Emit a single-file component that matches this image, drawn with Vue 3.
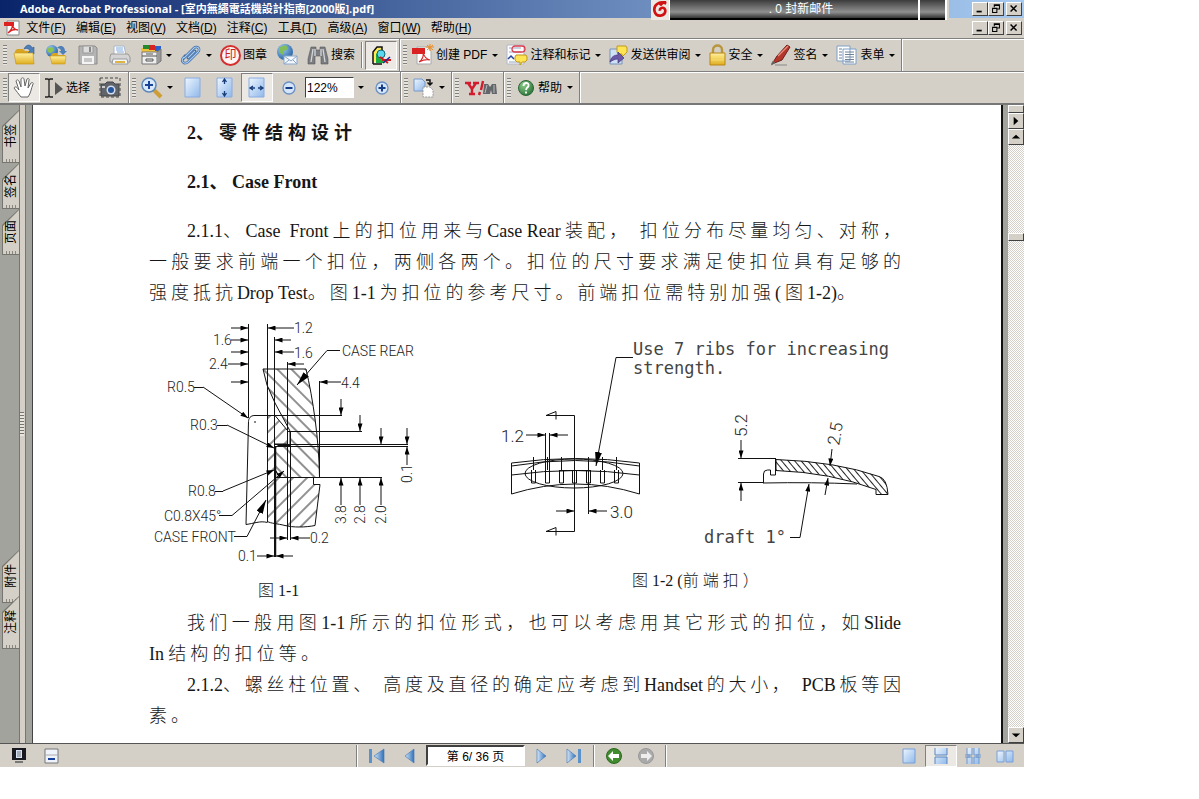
<script setup>
import { ref } from 'vue'

const menus = [
  ['文件', 'F'], ['编辑', 'E'], ['视图', 'V'], ['文档', 'D'], ['注释', 'C'],
  ['工具', 'T'], ['高级', 'A'], ['窗口', 'W'], ['帮助', 'H'],
]

const fileTools = [
  { icon: 'open', name: '打开' },
  { icon: 'open-web', name: '打开网页' },
  { icon: 'save', name: '保存' },
  { icon: 'print', name: '打印' },
  { icon: 'organizer', name: '管理器', arrow: true },
  { icon: 'clip', name: '附加', arrow: true },
  { icon: 'stamp', label: '图章', seal: '印' },
  { icon: 'mail', name: '电子邮件' },
  { icon: 'binoculars', label: '搜索' },
]
const taskTools = [
  { icon: 'pdf', label: '创建 PDF' },
  { icon: 'review', label: '注释和标记' },
  { icon: 'send', label: '发送供审阅', w: 19 },
  { icon: 'lock', label: '安全', w: 17 },
  { icon: 'pen', label: '签名', w: 20 },
  { icon: 'forms', label: '表单' },
]

const topTabs = [['书签', 'tall'], ['签名', ''], ['页面', '']]
const bottomTabs = [['附件', 'tall'], ['注释', 'tall']]

const zoom = ref('122%')
const page = ref('第 6/ 36 页')

const ribs = [533, 547, 561, 574, 588, 602, 616]
const widthArrows = [
  [231, 328, 248, 328], [294, 328, 268, 328],
  [231, 340, 248, 340], [291, 340, 275, 340],
  [231, 352, 248, 352], [294, 352, 275, 352],
  [228, 364, 248, 364], [304, 364, 288, 364],
  [231, 382, 248, 382], [341, 382, 320, 382],
  [341, 399, 341, 415], [341, 505, 341, 478],
  [360, 415, 360, 431], [360, 505, 360, 478],
  [381, 428, 381, 444], [381, 505, 381, 478],
  [407, 428, 407, 444], [407, 465, 407, 447],
  [270, 538, 287, 538], [310, 538, 291, 538],
  [257, 556, 274, 556], [293, 556, 276, 556],
  [526, 435, 545, 435], [568, 435, 550, 435],
  [556, 511, 574, 511], [607, 511, 589, 511],
  [741, 440, 741, 458], [741, 501, 741, 483],
  [832, 449, 830, 466], [825, 495, 828, 478],
  [227, 425, 274, 448], [223, 491, 274, 470],
  [203, 387, 248, 418],
]
const figureLabels = [
  [294, 333, '1.2'], [213, 345, '1.6'], [294, 358, '1.6'], [209, 369, '2.4'],
  [341, 388, '4.4'], [342, 356, 'CASE REAR'], [167, 392, 'R0.5'], [190, 430, 'R0.3'],
  [188, 496, 'R0.8'], [164, 521, 'C0.8X45°'], [154, 542, 'CASE FRONT'],
  [310, 543, '0.2'], [238, 561, '0.1'],
]
const turnedLabels = [
  [346, 524, '3.8'], [365, 524, '2.8'], [386, 524, '2.0'], [412, 483, '0.1'],
]
const plotterLabels = [
  [633, 355, 'Use 7 ribs for increasing'], [633, 374, 'strength.'],
  [704, 543, 'draft 1°'],
]
</script>

<template>
  <div class="desktop">
    <svg class="sprite" aria-hidden="true">
      <defs>
        <linearGradient id="gBlue" x1="0" y1="0" x2="1" y2="1"><stop offset="0" stop-color="#eef6ff" /><stop offset="1" stop-color="#8fb8ea" /></linearGradient>
        <linearGradient id="gNav" x1="0" y1="0" x2="1" y2="0"><stop offset="0" stop-color="#d5e8fb" /><stop offset="1" stop-color="#2f6fb8" /></linearGradient>
        <linearGradient id="gGold" x1="0" y1="0" x2="0" y2="1"><stop offset="0" stop-color="#fff0a0" /><stop offset="1" stop-color="#e0ae20" /></linearGradient>
        <radialGradient id="gGlobe" cx=".35" cy=".3" r=".8"><stop offset="0" stop-color="#9ccdf2" /><stop offset="1" stop-color="#1f5a9c" /></radialGradient>
        <radialGradient id="gGreen" cx=".35" cy=".3" r=".8"><stop offset="0" stop-color="#8ccc88" /><stop offset="1" stop-color="#237034" /></radialGradient>
      </defs>
      <symbol id="app" viewBox="0 0 16 16"><path d="M2 1h13v13H2z" fill="#f7e6e6" /><path d="M1 1h8v5H1z" fill="#d92b2b" /><path d="M5 13c3-3 4-6 3-10 2 5 3 7 6 7-3-1-6 0-9 3" fill="none" stroke="#c22" stroke-width="1.4" /></symbol>
      <symbol id="adobe" viewBox="0 0 16 16"><path d="M3 1h12v14H3z" fill="#fff" stroke="#888" /><path d="M0 2h10v4H0z" fill="#d22" /><path d="M4 13c3-3 5-5 4-9 1 4 3 6 6 6-3-1-7 0-10 3" fill="none" stroke="#d22" stroke-width="1.3" /></symbol>
      <symbol id="open" viewBox="0 0 22 22"><path d="M2 7l2-2h6l2 2h8v12H3z" fill="#d9a520" /><path d="M11 5c2-5 7-5 8-1l2-1v7l-6-1 2-2c-1-3-4-3-6-2z" fill="#4e7fb8" stroke="#315a8d" stroke-width=".6" /><path d="M1 9h19l1 11H3z" fill="url(#gGold)" stroke="#c79a1c" stroke-width=".7" /></symbol>
      <symbol id="open-web" viewBox="0 0 22 22"><circle cx="7" cy="7" r="6" fill="url(#gGlobe)" /><path d="M3 4l4-1 2 3-3 3-3-1z" fill="#8bc34f" /><path d="M12 4c4-4 8-1 8 3h2l-4 4-4-4h2c0-2-2-3-4-3" fill="#4e7fb8" /><path d="M6 11l2-2h4l1 2h7v9H7z" fill="#d9a520" /><path d="M5 12h16l-1 8H7z" fill="url(#gGold)" stroke="#c79a1c" stroke-width=".6" /></symbol>
      <symbol id="save" viewBox="0 0 22 22"><path d="M2 2h16l2 2v16H2z" fill="#b4b4b4" stroke="#8c8c8c" /><path d="M6 2h10v7H6z" fill="#ddd" stroke="#999" /><path d="M12 3h2v5h-2z" fill="#888" /><path d="M5 12h12v8H5z" fill="#f4f4f4" /><path d="M7 15h8M7 17h8" stroke="#999" /></symbol>
      <symbol id="print" viewBox="0 0 22 22"><path d="M5 2h10l2 9H5z" fill="#fff" stroke="#a9b6c8" /><path d="M7 4h7M7 6h7M8 8h7" stroke="#7ea8df" /><path d="M2 10h17l2 3v5H1v-5z" fill="#d4d4d4" stroke="#999" /><path d="M4 15h14l1 5H3z" fill="#f3f6fa" stroke="#999" /><path d="M6 18h10" stroke="#e0b440" stroke-width="2" /></symbol>
      <symbol id="organizer" viewBox="0 0 22 22"><path d="M1 4h19v5H1z" fill="#f0c23c" /><path d="M3 1h6v4H3z" fill="#238b2d" /><path d="M9 1h6v5H9z" fill="#d92222" /><path d="M15 2h6v5h-6z" fill="#2a5fd0" /><path d="M2 8h15v12H2z" fill="#eee" stroke="#777" /><path d="M17 8l4-3v12l-4 3" fill="#999" stroke="#777" /><path d="M2 12h15M6 10h7M6 15h7v2H6z" fill="none" stroke="#555" /></symbol>
      <symbol id="clip" viewBox="0 0 22 22"><path d="M4 14L14 4c3-3 7 1 4 4L8 18c-4 3-8-1-4-5zM8 14l7-7" fill="none" stroke="#3f6ca6" stroke-width="2.600" stroke-linecap="round" /><path d="M4 14L14 4c3-3 7 1 4 4L8 18c-4 3-8-1-4-5M8 14l7-7" fill="none" stroke="#a9cbef" stroke-width="1.1" /></symbol>
      <symbol id="mail" viewBox="0 0 22 22"><circle cx="9" cy="8" r="8" fill="url(#gGlobe)" /><path d="M4 3l6-2 2 4-4 2-1 4-4-3z" fill="#82bd58" /><path d="M8 12h13v8H8z" fill="#f4f8fd" stroke="#8aa6c8" /><path d="M8 12l7 5 6-5M8 20l5-4M21 20l-4-4" fill="none" stroke="#8aa6c8" /></symbol>
      <symbol id="binoculars" viewBox="0 0 22 22"><path d="M4 3h5v3h4V3h5l3 12v5h-7v-8h-6v8H1v-5z" fill="#7b7d80" stroke="#55585b" stroke-width=".6" /><path d="M6 5L4 18M16 5l2 13M8 5v7M14 5v7" stroke="#d4d7da" stroke-width="1.3" /></symbol>
      <symbol id="toolkit" viewBox="0 0 22 22"><path d="M3 20V8l4-5h5v4M3 20h9" fill="#ffec55" stroke="#111" stroke-width="1.5" /><path d="M6 19V9l9 10z" fill="#1dab40" /><circle cx="11" cy="10" r="4" fill="#5bd7ee" stroke="#167" /><path d="M10 13l8 6M12 16h9" stroke="#d31515" stroke-width="2" /><path d="M13 19l7-6" stroke="#152c9c" stroke-width="1.6" /></symbol>
      <symbol id="pdf" viewBox="0 0 22 22"><path d="M5 3h11l3 4v13H5z" fill="#fff" stroke="#aaa" /><path d="M0 4h13v6H0z" fill="#db2222" /><path d="M7 18c4-3 5-6 4-10 1 5 3 7 7 8-4-1-7 0-11 2" fill="none" stroke="#d52c2c" stroke-width="1.2" /><path d="M18 0v7M14 3h8M15 1l6 5M21 1l-6 5" stroke="#ed8b23" /></symbol>
      <symbol id="review" viewBox="0 0 22 22"><path d="M1 1h17v19H1z" fill="#fbfbff" stroke="#b0b8c8" /><path d="M3 4h12M3 8h12M3 18h12" stroke="#98a6bd" /><rect x="6" y="2" width="13" height="6" rx="3" fill="none" stroke="#dd3c4c" stroke-width="1.3" /><path d="M2 15l3-3 3 3" fill="none" stroke="#23469c" stroke-width="1.5" /><path d="M10 11h10l1 2v3l-2 2h-3l-2 3v-3h-3l-2-2v-3z" fill="#ffe554" stroke="#bf9920" /></symbol>
      <symbol id="send" viewBox="0 0 19 22"><path d="M1 5h12v15H1z" fill="#cfe1f7" stroke="#7592b8" /><path d="M8 2h9l1 2v4l-2 2-3 3v-3H9L8 8z" fill="#ffe554" stroke="#bf9920" /><path d="M1 18c1-5 4-7 8-7V8l6 6-6 5v-4c-3 0-5 1-8 3" fill="#6d58a8" stroke="#403278" stroke-width=".7" /></symbol>
      <symbol id="lock" viewBox="0 0 17 22"><path d="M4 11V6c0-6 9-6 9 0v5" fill="none" stroke="#b8963e" stroke-width="2.4" /><path d="M1 9h15v12H1z" fill="url(#gGold)" stroke="#b98616" /><path d="M2 13h13M2 16h13" stroke="#f8dc62" /></symbol>
      <symbol id="pen" viewBox="0 0 20 22"><path d="M1 20L6 12 16 1l3 2-8 13z" fill="#b3382b" stroke="#6d2019" /><path d="M7 12L17 2" stroke="#ec8f7f" stroke-width="1.3" /><path d="M0 21l2-4 2 2zM4 21h12" fill="#555" stroke="#777" stroke-width=".8" /></symbol>
      <symbol id="forms" viewBox="0 0 22 22"><path d="M1 2h13v15H1zM7 5h13v15H7z" fill="#fff" stroke="#7fa0c8" /><path d="M3 5h3M3 8h3M3 11h3M3 14h3M9 8h9M9 10.500h9M9 13h9M9 15.500h9M9 18h9" stroke="#6f8297" /></symbol>
      <symbol id="hand" viewBox="0 0 22 22"><path d="M8 20c-2-3-5-6-7-9 1-2 3-1 4 1l1 1-3-9c1-2 2-1 3 0l2 6V2c1-2 3-1 3 0l1 7 2-7c1-1 3 0 2 1l-1 8 3-5c1-1 3 0 2 1-2 5-2 9-5 13z" fill="#fff" stroke="#666" stroke-linejoin="round" /></symbol>
      <symbol id="select" viewBox="0 0 18 22"><path d="M0 2h3l1 1 1-1h3M4 3v16M0 20h3l1-1 1 1h3" fill="none" stroke="#222" stroke-width="1.3" /><path d="M10 5l8 7-8 6z" fill="#555" /></symbol>
      <symbol id="camera" viewBox="0 0 22 22"><path d="M1 1h20v19H1z" fill="none" stroke="#444" stroke-dasharray="3 2" /><path d="M2 7h4l2-2h6l2 2h4v12H2z" fill="#60656c" stroke="#444" /><circle cx="12" cy="13" r="4.500" fill="#d5dde8" /><circle cx="12" cy="13" r="3" fill="#24559c" /><path d="M3 9h3v2H3z" fill="#ccc" /></symbol>
      <symbol id="zoom" viewBox="0 0 22 22"><path d="M13 13l7 7" stroke="#ce9d36" stroke-width="4" /><circle cx="8" cy="8" r="7" fill="#d8e9fb" stroke="#5d87b9" stroke-width="1.5" /><path d="M4 8h8M8 4v8" stroke="#16449a" stroke-width="2" /></symbol>
      <symbol id="page" viewBox="0 0 22 22"><path d="M3 1h15v19H3z" fill="url(#gBlue)" stroke="#8aace0" /></symbol>
      <symbol id="fit-height" viewBox="0 0 22 22"><path d="M3 1h15v19H3z" fill="url(#gBlue)" stroke="#8aace0" /><path d="M10.500 2v5M10.500 14v5M8.500 5l2-3 2 3M8.500 16l2 3 2-3" fill="none" stroke="#173f7c" stroke-width="1.3" /></symbol>
      <symbol id="fit-width" viewBox="0 0 22 22"><path d="M3 1h15v19H3z" fill="url(#gBlue)" stroke="#8aace0" /><path d="M4 11h5M12 11h5M7 9l-3 2 3 2M14 9l3 2-3 2" fill="none" stroke="#173f7c" stroke-width="1.3" /></symbol>
      <symbol id="minus" viewBox="0 0 22 22"><circle cx="11" cy="11" r="6" fill="#d5e6fa" stroke="#6b90c2" stroke-width="1.3" /><path d="M7.500 11h7" stroke="#163c86" stroke-width="2" /></symbol>
      <symbol id="plus" viewBox="0 0 22 22"><circle cx="11" cy="11" r="6" fill="#d5e6fa" stroke="#6b90c2" stroke-width="1.3" /><path d="M7.500 11h7M11 7.500v7" stroke="#163c86" stroke-width="2" /></symbol>
      <symbol id="rotate" viewBox="0 0 22 22"><path d="M1 2h8l3 3v9H1z" fill="url(#gBlue)" stroke="#7698c8" /><path d="M10 10h7l3 3v7H10z" fill="#fff" stroke="#999" stroke-dasharray="2 1" /><path d="M13 3h4v4M14.500 5.500L17 8l2.500-2.500" fill="none" stroke="#111" stroke-width="1.5" /></symbol>
      <symbol id="yahoo" viewBox="0 0 33 22"><path d="M1 6h6M9 6h6M4 6l4 6 4-6M8 11v6M5 17h6" fill="none" stroke="#d21b2c" stroke-width="2.400" /><path d="M19 4l-2 9M16 15l-1 3" stroke="#d21b2c" stroke-width="2.400" /><path d="M20 7h4l2 3 2-3h4l1 10h-5l-1-4-1 4h-7z" fill="#63666a" /><path d="M23 8l-2 8M30 8v8" stroke="#bbb" /></symbol>
      <symbol id="help" viewBox="0 0 17 22"><circle cx="8.500" cy="11" r="7.500" fill="url(#gGreen)" stroke="#2d6537" /><path d="M6 9c0-4 6-4 5 0-1 2-2 1-2.500 4M8.500 14.500v2" fill="none" stroke="#fff" stroke-width="1.800" /></symbol>
      <symbol id="monitor" viewBox="0 0 22 22"><path d="M4 3h14v12H4z" fill="#17191f" /><path d="M8 5h6v8H8z" fill="#d8e4f8" /><path d="M9 7h4M9 9h4M9 11h4" stroke="#777" /><path d="M7 17h8" stroke="#777" stroke-width="2" /></symbol>
      <symbol id="collapse" viewBox="0 0 22 22"><path d="M5 4h13v14H5z" fill="#eef2fa" stroke="#777" /><path d="M5 10h13" stroke="#aaa" /><path d="M8 14h7" stroke="#173f9c" stroke-width="2" /></symbol>
      <symbol id="first" viewBox="0 0 22 22"><path d="M3 4h3v14H3z" fill="#5c92ca" /><path d="M18 4v14L8 11z" fill="url(#gNav)" stroke="#4a80bc" stroke-width=".7" /></symbol>
      <symbol id="prev" viewBox="0 0 22 22"><path d="M16 4v14L7 11z" fill="url(#gNav)" stroke="#4a80bc" stroke-width=".7" /></symbol>
      <symbol id="next" viewBox="0 0 22 22"><path d="M6 4v14l9-7z" fill="url(#gNav)" stroke="#4a80bc" stroke-width=".7" /></symbol>
      <symbol id="last" viewBox="0 0 22 22"><path d="M4 4v14l9-7z" fill="url(#gNav)" stroke="#4a80bc" stroke-width=".7" /><path d="M15 4h3v14h-3z" fill="#5c92ca" /></symbol>
      <symbol id="back" viewBox="0 0 22 22"><circle cx="11" cy="11" r="7.500" fill="#408b2d" stroke="#2c6920" /><path d="M5 11l5-5v3h6v4h-6v3z" fill="#fff" /></symbol>
      <symbol id="forward" viewBox="0 0 22 22"><circle cx="11" cy="11" r="7.500" fill="#aaa" stroke="#999" /><path d="M17 11l-5-5v3H6v4h6v3z" fill="#eee" /></symbol>
      <symbol id="single" viewBox="0 0 22 22"><path d="M5 4h12v14H5z" fill="url(#gBlue)" stroke="#78a0d8" /></symbol>
      <symbol id="continuous" viewBox="0 0 22 22"><path d="M5 3v7h12V3M5 19v-7h12v7" fill="url(#gBlue)" stroke="#5a86bd" /></symbol>
      <symbol id="quad" viewBox="0 0 22 22"><path d="M5 3v7h5V3M5 19v-7h5v7M12 3v7h5V3M12 19v-7h5v7M3 10h5M3 12h5M14 10h5M14 12h5" fill="url(#gBlue)" stroke="#6f98ce" /></symbol>
      <symbol id="facing" viewBox="0 0 22 22"><path d="M3 6h7v11H3zM12 6h7v11h-7z" fill="url(#gBlue)" stroke="#78a0d8" /></symbol>
    </svg>

    <main class="window">
      <header class="titlebar">
        <svg class="mini"><use href="#app" /></svg>
        <h1>Adobe Acrobat Professional - [室内無繩電話機設計指南[2000版].pdf]</h1>
        <div class="winbtns">
          <button aria-label="最小化"><svg viewBox="0 0 16 14"><path d="M4 10h6" stroke="#000" stroke-width="2" /></svg></button>
          <button aria-label="还原"><svg viewBox="0 0 16 14"><path d="M6 5V2h6v5H9M4 6h5v5H4zM6 3h6M4 6.500h5" fill="none" stroke="#000" stroke-width="1.200" /></svg></button>
          <button class="close" aria-label="关闭"><svg viewBox="0 0 16 14"><path d="M4 3l7 7M11 3l-7 7" stroke="#000" stroke-width="1.700" /></svg></button>
        </div>
      </header>
      <aside class="mailbar">
        <span class="maillogo"><svg viewBox="0 0 18 18"><path d="M16 3C8-1 1 5 3 12c2 7 12 5 12-1 0-5-7-4-6 0M16 1c-3 0-5 1-7 4" fill="none" stroke="#d01212" stroke-width="3" /></svg></span>
        <span class="mailtext">. 0 封新邮件</span><i></i>
      </aside>

      <nav class="menubar" aria-label="菜单">
        <svg class="mini"><use href="#adobe" /></svg>
        <div class="menus">
          <button v-for="m in menus" :key="m[0] + m[1]">{{ m[0] }}(<u>{{ m[1] }}</u>)</button>
        </div>
        <div class="winbtns">
          <button aria-label="最小化文档"><svg viewBox="0 0 16 14"><path d="M4 10h6" stroke="#000" stroke-width="2" /></svg></button>
          <button aria-label="还原文档"><svg viewBox="0 0 16 14"><path d="M6 5V2h6v5H9M4 6h5v5H4zM6 3h6M4 6.500h5" fill="none" stroke="#000" stroke-width="1.200" /></svg></button>
          <button class="close" aria-label="关闭文档"><svg viewBox="0 0 16 14"><path d="M4 3l7 7M11 3l-7 7" stroke="#000" stroke-width="1.700" /></svg></button>
        </div>
      </nav>

      <div class="toolrow">
        <div class="group">
          <b class="grip"></b>
          <button v-for="t in fileTools" :key="t.icon" class="tool" :class="{ plain: !t.label && !t.arrow }" :aria-label="t.label || t.name">
            <b v-if="t.seal" class="seal">{{ t.seal }}</b>
            <svg v-else class="ico"><use :href="'#' + t.icon" /></svg>
            <span v-if="t.label">{{ t.label }}</span>
            <i v-if="t.arrow" class="arrow"></i>
          </button>
          <b class="rule"></b>
          <button class="tool plain on" aria-label="工具箱"><svg class="ico"><use href="#toolkit" /></svg></button>
        </div>
        <div class="group">
          <b class="grip"></b>
          <button v-for="t in taskTools" :key="t.icon" class="tool">
            <svg class="ico" :style="{ width: (t.w || 22) + 'px' }"><use :href="'#' + t.icon" /></svg>
            <span>{{ t.label }}</span><i class="arrow"></i>
          </button>
        </div>
      </div>

      <div class="toolrow second">
        <div class="group">
          <b class="grip"></b>
          <button class="tool plain on" aria-label="手形工具"><svg class="ico"><use href="#hand" /></svg></button>
          <button class="tool"><svg class="ico slim"><use href="#select" /></svg><span>选择</span></button>
          <button class="tool plain" aria-label="快照"><svg class="ico"><use href="#camera" /></svg></button>
        </div>
        <div class="group">
          <b class="grip"></b>
          <button class="tool" aria-label="放大工具"><svg class="ico"><use href="#zoom" /></svg><i class="arrow"></i></button>
          <button class="tool plain" aria-label="实际大小"><svg class="ico"><use href="#page" /></svg></button>
          <button class="tool plain" aria-label="适合页面"><svg class="ico"><use href="#fit-height" /></svg></button>
          <button class="tool plain on" aria-label="适合宽度"><svg class="ico"><use href="#fit-width" /></svg></button>
          <button class="tool plain" aria-label="缩小"><svg class="ico"><use href="#minus" /></svg></button>
          <input v-model="zoom" class="zoombox" aria-label="缩放比例" />
          <button class="tool drop" aria-label="缩放列表"><i class="arrow"></i></button>
          <button class="tool plain" aria-label="放大"><svg class="ico"><use href="#plus" /></svg></button>
        </div>
        <div class="group">
          <b class="grip"></b>
          <button class="tool" aria-label="旋转视图"><svg class="ico"><use href="#rotate" /></svg><i class="arrow"></i></button>
        </div>
        <div class="group">
          <b class="grip"></b>
          <button class="tool" aria-label="Yahoo 搜索"><svg class="ico wide"><use href="#yahoo" /></svg></button>
        </div>
        <div class="group">
          <b class="grip"></b>
          <button class="tool"><svg class="ico slim"><use href="#help" /></svg><span>帮助</span><i class="arrow"></i></button>
        </div>
      </div>

      <section class="work">
        <nav class="tabs" aria-label="导览窗格">
          <button v-for="t in topTabs" :key="t[0]" :class="t[1]"><span>{{ t[0] }}</span></button>
          <b class="fill"></b>
          <button v-for="t in bottomTabs" :key="t[0]" :class="t[1]"><span>{{ t[0] }}</span></button>
        </nav>
        <div class="splitter"><i></i></div>

        <article class="paper">
          <h2><span class="run">2、</span>零件结构设计</h2>
          <h3>2.1、 Case Front</h3>
          <div class="para">
            <p class="indent"><span class="run">2.1.1、 Case&nbsp; Front</span>上的扣位用来与<span class="run">Case Rear</span>装配， 扣位分布尽量均匀、对称，</p>
            <p>一般要求前端一个扣位，两侧各两个。扣位的尺寸要求满足使扣位具有足够的</p>
            <p class="short">强度抵抗<span class="run">Drop Test。</span>图<span class="run">1-1</span>为扣位的参考尺寸。前端扣位需特别加强(图<span class="run">1-2)。</span></p>
          </div>

          <svg class="figure" viewBox="149 309 752 299" role="img" aria-label="扣位结构图">
            <defs>
              <marker id="tip" viewBox="0 0 9 6" refX="9" refY="3" markerWidth="9" markerHeight="5" markerUnits="userSpaceOnUse" orient="auto"><path d="M0 0l9 3-9 3z" /></marker>
              <marker id="bigtip" viewBox="0 0 14 7" refX="14" refY="3.500" markerWidth="14" markerHeight="7" markerUnits="userSpaceOnUse" orient="auto"><path d="M0 0l14 3.500L0 7z" /></marker>
              <pattern id="hatchDown" width="10" height="10" patternUnits="userSpaceOnUse" patternTransform="rotate(45)"><path d="M0 5h10" stroke="#222" /></pattern>
              <pattern id="hatchUp" width="10" height="10" patternUnits="userSpaceOnUse" patternTransform="rotate(-45)"><path d="M0 5h10" stroke="#222" /></pattern>
              <pattern id="hatchFine" width="5" height="5" patternUnits="userSpaceOnUse" patternTransform="rotate(50)"><path d="M0 2.500h5" stroke="#222" /></pattern>
            </defs>
            <g class="ink">
              <path d="M263 369h43c7 30 13 70 13.500 108.500H280l-5-8V448l3-2.500h12V431l-15-28-8-18z" fill="url(#hatchDown)" />
              <path d="M267.500 415.500h7.500l12.500 15v13.500h-13v25l5 8.500h34v7h6.500l-5 41c-10 2-22 2-30 0s-14-2-17.500-4z" fill="url(#hatchUp)" />
              <path d="M267.500 415.500h-13c-4 0-6 3-6 6l-2.500 103c8-1 14-4 21.500-2" />
              <path d="M248.500 324v94M267.500 324v198M274.500 337v220M287.500 362v178M290.500 431v109M319.500 381v97M254 415.500h88M287 431.500h75M275 444.500h133M275 446.500h133M274 477.500h108" />
              <path d="M275.500 446v111" stroke-width="1.500" />
              <path d="M254 422h4" stroke-dasharray="2 2" />
              <path d="M340 350.500h-13L297 385" marker-end="url(#bigtip)" />
              <path d="M234 536.500h13L266 500" marker-end="url(#bigtip)" />
              <path d="M194 387.500h9M217 425.500h10M215 491.500h8" />
              <path d="M219 515.500h13L284 471" marker-end="url(#tip)" />
              <path v-for="(a, i) in widthArrows" :key="i" :d="`M${a[0]} ${a[1]}L${a[2]} ${a[3]}`" marker-end="url(#tip)" />

              <path d="M633 357.500h-17L596 466" marker-end="url(#bigtip)" />
              <path d="M546 415.500h28.500v116H546l10-4v8M546 415.500l10-4v8M545.500 433v50M549.500 433v50M588.500 458v56" />
              <path d="M511.500 463q64-9 128 0v31q-64-20-128 0zM511.500 466q64-11 128 0M511.500 475q64-9 128 0" />
              <ellipse cx="574" cy="473.500" rx="49" ry="14.500" />
              <path d="M559 470.500h31" />
              <path v-for="x in ribs" :key="x" :d="`M${x + 0.5} 457v13M${x - 1.5} 470v13h4v-13`" class="rib" />

              <path d="M738 458.500h38M738 482.500h26M763 483q50-1 94 1" />
              <path d="M763.500 482v-8q0-4 4-4h3v5h5v-16" />
              <path d="M776 459.500q60 2 103 17 8 2 9 18h-12v-5q-45-17-100-19z" fill="url(#hatchFine)" />
              <path d="M790 537.500h10L809 484" marker-end="url(#tip)" />
            </g>
            <g class="cad">
              <text v-for="(l, i) in figureLabels" :key="i" :x="l[0]" :y="l[1]">{{ l[2] }}</text>
              <text v-for="(l, i) in turnedLabels" :key="'t' + i" :transform="`translate(${l[0]} ${l[1]}) rotate(-90)`">{{ l[2] }}</text>
            </g>
            <g class="cad large">
              <text x="501" y="442">1.2</text>
              <text x="610" y="518">3.0</text>
              <text transform="translate(747 437) rotate(-90)">5.2</text>
              <text transform="translate(839 446) rotate(-80)">2.5</text>
            </g>
            <g class="plotter">
              <text v-for="(l, i) in plotterLabels" :key="i" :x="l[0]" :y="l[1]">{{ l[2] }}</text>
            </g>
            <g class="caption">
              <text x="258" y="596">图 1-1</text>
              <text x="632" y="586">图 1-2 (前 端 扣 ）</text>
            </g>
          </svg>

          <div class="para">
            <p class="indent">我们一般用图<span class="run">1-1</span>所示的扣位形式，也可以考虑用其它形式的扣位，如<span class="run">Slide</span></p>
            <p class="tail"><span class="run">In</span>结构的扣位等。</p>
            <p class="indent"><span class="run">2.1.2、</span>螺丝柱位置、 高度及直径的确定应考虑到<span class="run">Handset</span>的大小， <span class="run">PCB</span>板等因</p>
            <p class="last">素。</p>
          </div>
        </article>

        <div class="gutter"></div>
        <div class="scroll">
          <b class="split"></b>
          <button aria-label="展开"><svg viewBox="0 0 15 15"><path d="M5 3v9l5-4.500z" /></svg></button>
          <button aria-label="向上"><svg viewBox="0 0 15 15"><path d="M3 9h9L7.500 5z" /></svg></button>
          <div class="track"><b class="thumb"></b></div>
          <button aria-label="向下"><svg viewBox="0 0 15 15"><path d="M3 6h9l-4.500 4z" /></svg></button>
        </div>
      </section>

      <footer class="status">
        <div class="side">
          <button class="tool plain" aria-label="全屏"><svg class="ico"><use href="#monitor" /></svg></button>
          <button class="tool plain" aria-label="隐藏工具栏"><svg class="ico"><use href="#collapse" /></svg></button>
        </div>
        <b class="rule"></b>
        <div class="pager">
          <button class="tool plain" aria-label="第一页"><svg class="ico"><use href="#first" /></svg></button>
          <button class="tool plain" aria-label="上一页"><svg class="ico"><use href="#prev" /></svg></button>
          <input v-model="page" aria-label="页码" />
          <button class="tool plain" aria-label="下一页"><svg class="ico"><use href="#next" /></svg></button>
          <button class="tool plain" aria-label="最后一页"><svg class="ico"><use href="#last" /></svg></button>
        </div>
        <b class="rule"></b>
        <div class="pager">
          <button class="tool plain" aria-label="上一视图"><svg class="ico"><use href="#back" /></svg></button>
          <button class="tool plain" aria-label="下一视图"><svg class="ico"><use href="#forward" /></svg></button>
        </div>
        <b class="rule"></b>
        <div class="layouts">
          <button class="tool plain" aria-label="单页"><svg class="ico"><use href="#single" /></svg></button>
          <button class="tool plain on" aria-label="连续"><svg class="ico"><use href="#continuous" /></svg></button>
          <button class="tool plain" aria-label="连续对开"><svg class="ico"><use href="#quad" /></svg></button>
          <button class="tool plain" aria-label="对开"><svg class="ico"><use href="#facing" /></svg></button>
        </div>
      </footer>
    </main>
  </div>
</template>

<style>
body { background: #fff; }
</style>

<style scoped>
* { box-sizing: border-box; }
.desktop { min-height: 100vh; display: flex; padding: 0 175px 32px 0; font: 12px/16px "Liberation Sans", "Noto Sans CJK SC", sans-serif; color: #000; }
.sprite { position: absolute; width: 0; height: 0; }
.window { position: relative; flex: 1; min-width: 0; display: flex; flex-direction: column; background: #d4d0c8; }
button { font: inherit; color: inherit; border: 0; padding: 0; margin: 0; background: none; }
input { font: inherit; color: #000; min-width: 0; }
.mini { width: 16px; height: 16px; flex: none; }

.titlebar { height: 18px; display: flex; align-items: center; padding: 0 2px; background: linear-gradient(90deg, #0a246a, #a6caf0); }
.titlebar h1 { flex: 1; margin: 0 0 0 2px; font: bold 11px/18px "Open Sans", "Noto Sans CJK TC", sans-serif; color: #fff; white-space: nowrap; }
.winbtns { display: flex; margin-left: auto; }
.winbtns button { width: 16px; height: 14px; background: #d4d0c8; border: 1px solid; border-color: #fff #404040 #404040 #fff; }
.winbtns .close { margin-left: 2px; }
.winbtns svg { display: block; width: 100%; height: 100%; }
.mailbar { position: absolute; top: 0; right: 75px; width: 298px; height: 20px; display: flex; border-right: 2px solid #d4d0c8; background: linear-gradient(#3c3c3c, #909090 60%, #3a3a3a 88%, #000 92%); color: #fff; }
.maillogo { width: 19px; background: #ece8e2; padding: 1px; border-right: 1px solid #fff; }
.maillogo svg { display: block; width: 16px; height: 16px; }
.mailtext { flex: 1; padding-left: 14px; text-align: center; line-height: 19px; }
.mailbar i { width: 29px; border: solid #fff; border-width: 0 2px; }

.menubar { height: 20px; display: flex; align-items: center; padding: 0 2px 0 4px; }
.menus { display: flex; padding-left: 1px; }
.menus button { padding: 0 5px; min-width: 50px; white-space: nowrap; }

.toolrow { height: 33px; display: flex; border-top: 1px solid #808080; box-shadow: inset 0 1px #fff; }
.second { height: 34px; border-bottom: 2px solid #777; }
.group { display: flex; align-items: center; padding: 0 2px 0 3px; border-right: 1px solid #808080; box-shadow: 1px 0 #fff; }
.grip { width: 4px; height: 20px; margin-right: 1px; background: repeating-linear-gradient(#808080 0 1px, #e8e5df 1px 3px); }
.tool { height: 29px; display: flex; align-items: center; padding: 0 4px; white-space: nowrap; flex: none; }
.tool span { margin-left: 2px; }
.plain { width: 32px; padding: 0; justify-content: center; }
.on { background: #ece9e4; border: 1px solid; border-color: #808080 #fff #fff #808080; }
.ico { width: 22px; height: 22px; flex: none; }
.slim { width: 20px; }
.wide { width: 33px; }
.seal { width: 21px; height: 21px; border: 2px solid #d33030; border-radius: 50%; background: #fff4f4; color: #c82020; font-weight: normal; line-height: 16px; text-align: center; }
.arrow { width: 0; height: 0; margin-left: 4px; border: 3px solid transparent; border-top-color: #000; border-bottom: 0; }
.tool span + .arrow { margin-left: 5px; }
.rule { width: 2px; height: 26px; margin: 0 2px; border-left: 1px solid #808080; border-right: 1px solid #fff; }
.zoombox { width: 49px; height: 21px; border: 1px solid; border-color: #404040 #fff #fff #404040; padding: 0 1px; background: #fff; }
.drop { padding: 0 2px 0 0; }

.work { flex: 1; min-height: 0; display: flex; background: #a3a39e; }
.tabs { width: 19px; display: flex; flex-direction: column; padding: 5px 0 94px 2px; }
.tabs button { position: relative; width: 17px; height: 46px; display: flex; align-items: center; justify-content: center; background: #77756f; clip-path: polygon(100% 0, 100% 100%, 0 100%, 0 16px); }
.tabs button::before { content: ""; position: absolute; inset: 1px 0 1px 1px; background: repeating-linear-gradient(90deg, #8a877f 0 1px, transparent 1px 3px) 3px 100% / 11px 3px no-repeat, #d4d0c8; clip-path: polygon(100% 0, 100% 100%, 0 100%, 0 16px); }
.tabs .tall { height: 53px; }
.tabs .tall + .tall { margin-top: -7px; }
.tabs span { position: relative; writing-mode: vertical-rl; text-orientation: sideways; transform: rotate(180deg); line-height: 16px; }
.fill { flex: 1; }
.splitter { width: 14px; display: flex; align-items: center; border-right: 1px solid #444; background: linear-gradient(90deg, #77756f 0 1px, #d4d0c8 1px 6px, #77756f 6px 7px, #a3a39e 7px); }
.splitter i { width: 4px; height: 24px; margin-left: 1px; background: repeating-linear-gradient(#77756f 0 1px, #e8e5df 1px 3px); }

.paper { flex: 1; min-width: 0; background: #fff; padding: 13px 100px 10px 116px; font: 18px/31px "Liberation Serif", "Noto Sans CJK SC", serif; font-weight: 300; color: #161616; overflow: hidden; }
.paper h2, .paper h3 { margin: 0 0 18px 38px; font: bold 18px/31px "Liberation Serif", "Noto Sans CJK SC", serif; }
.paper h2 { width: 165px; text-align-last: justify; white-space: nowrap; }
.paper p { margin: 0; white-space: nowrap; text-align: justify; text-align-last: justify; }
.run { display: inline-block; text-align-last: left; }
.paper .indent { padding-left: 38px; }
.paper .short { padding-right: 46px; }
.paper .tail { width: 170px; }
.paper .last { width: 40px; }
.figure { display: block; width: 100%; height: auto; overflow: visible; }
.ink { fill: none; stroke: #111; stroke-width: 1; }
#tip path, #bigtip path { fill: #000; stroke: none; }
.cad { font: 300 14px Roboto, sans-serif; fill: #222; }
.large { font-size: 17px; }
.plotter { font: 17px "DejaVu Sans Mono", monospace; fill: #444; }
.caption { font: 16px "Liberation Serif", "Noto Sans CJK SC", serif; font-weight: 300; fill: #161616; }

.gutter { width: 7px; border-left: 2px solid #111; background: #a3a39e; }
.scroll { width: 16px; display: flex; flex-direction: column; background: repeating-conic-gradient(#d4d0c8 0 25%, #fff 0 50%) 0 0 / 2px 2px; }
.scroll button, .split, .thumb { height: 16px; background: #d4d0c8; border: 1px solid; border-color: #fff #404040 #404040 #fff; }
.scroll .split { height: 8px; }
.scroll svg { display: block; width: 100%; height: 100%; }
.track { flex: 1; }
.thumb { display: block; height: 8px; margin-top: 88px; }

.status { height: 24px; display: flex; align-items: center; border-top: 1px solid #555; }
.status .tool { height: 22px; }
.status .rule { height: 22px; margin: 0 3px; }
.side { width: 353px; display: flex; padding-left: 3px; }
.pager, .layouts { display: flex; align-items: center; }
.pager input { width: 99px; height: 21px; margin: 0 1px; text-align: center; border: 2px solid; border-color: #404040 #fff #fff #404040; background: #fff; padding: 0; }
.layouts { margin-left: auto; padding-right: 3px; }
</style>
